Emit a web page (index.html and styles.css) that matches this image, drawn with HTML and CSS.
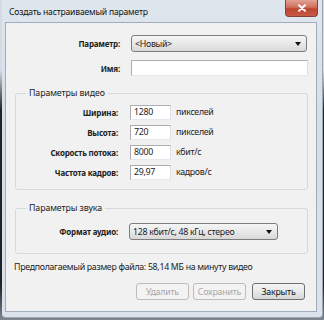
FILE: index.html
```html
<!DOCTYPE html>
<html lang="ru">
<head>
<meta charset="utf-8">
<link rel="stylesheet" href="styles.css">
</head>
<body>
<div class="window">
  <div class="titlebar">
    <span class="title">Создать настраиваемый параметр</span>
    <span class="close"><svg width="10" height="8" viewBox="0 0 10 8"><path d="M2 1.2 L8 6.8 M8 1.2 L2 6.8" stroke="#fff" stroke-width="2" stroke-linecap="round"/></svg></span>
  </div>
  <div class="client">
    <div class="row top-row first">
      <label class="lbl top-lbl">Параметр:</label>
      <div class="select wide"><span>&lt;Новый&gt;</span><span class="arrow"></span></div>
    </div>
    <div class="row top-row second">
      <label class="lbl top-lbl">Имя:</label>
      <div class="input wide-input"></div>
    </div>

    <fieldset class="group video">
      <legend>Параметры видео</legend>
      <div class="row grow"><label class="lbl grp-lbl">Ширина:</label><div class="input small">1280</div><span class="unit">пикселей</span></div>
      <div class="row grow"><label class="lbl grp-lbl">Высота:</label><div class="input small">720</div><span class="unit">пикселей</span></div>
      <div class="row grow"><label class="lbl grp-lbl">Скорость потока:</label><div class="input small">8000</div><span class="unit">кбит/с</span></div>
      <div class="row grow"><label class="lbl grp-lbl">Частота кадров:</label><div class="input small">29,97</div><span class="unit">кадров/с</span></div>
    </fieldset>

    <fieldset class="group audio">
      <legend>Параметры звука</legend>
      <div class="row arow"><label class="lbl grp-lbl">Формат аудио:</label><div class="select mid"><span>128 кбит/с, 48 кГц, стерео</span><span class="arrow"></span></div></div>
    </fieldset>

    <p class="note">Предполагаемый размер файла: 58,14 МБ на минуту видео</p>

    <div class="buttons">
      <button class="btn disabled">Удалить</button>
      <button class="btn disabled">Сохранить</button>
      <button class="btn close-btn">Закрыть</button>
    </div>
  </div>
</div>
</body>
</html>
```

FILE: styles.css
```css
html, body {
  margin: 0;
  padding: 0;
}
body {
  width: 324px;
  height: 320px;
  overflow: hidden;
  background: linear-gradient(#d3dbe4 0, #d3dbe4 70px, #1f232a 110px, #1f232a 285px, #7d8792 320px);
  font-family: "Noto Sans", "Open Sans", sans-serif;
  font-size: 8.8px;
  letter-spacing: -0.3px;
  color: #222;
}
.window {
  margin-left: 2px;
  width: 321px;
  height: 318px;
  box-sizing: border-box;
  background: linear-gradient(#dfe6ee, #d5dde7 40%, #dbe2eb);
  border-right: 1px solid #9aa6b4;
  border-bottom: 1px solid #9aa6b4;
  border-radius: 0 0 4px 4px;
  padding: 0 5px 5px 3px;
  display: flex;
  flex-direction: column;
}
.titlebar {
  height: 22px;
  display: flex;
  align-items: center;
  position: relative;
}
.title {
  font-size: 8.6px;
  letter-spacing: -0.2px;
  color: #111;
  margin-left: 4px;
  margin-top: 1px;
}
.close {
  position: absolute;
  right: -1px;
  top: 0;
  width: 33px;
  height: 17px;
  border-radius: 0 0 4px 4px;
  background: linear-gradient(#e3a194, #d0705d 45%, #bf4530 55%, #c65a45);
  border: 1px solid #8a4038;
  border-top: none;
  box-sizing: border-box;
  display: flex;
  align-items: center;
  justify-content: center;
}
.client {
  height: 290px;
  box-sizing: border-box;
  background: #f1f1f1;
  border: 1px solid #a0acba;
  display: flex;
  flex-direction: column;
}
.row {
  display: flex;
  align-items: center;
}
.lbl {
  font-weight: bold;
  font-size: 8px;
  letter-spacing: -0.2px;
  text-align: right;
  flex: none;
}
.top-lbl { width: 114px; margin-right: 11px; }
.first { margin-top: 12px; height: 17px; }
.second { margin-top: 8px; height: 16px; }
.select {
  height: 17px;
  box-sizing: border-box;
  border: 1px solid #7d7d7d;
  border-radius: 3px;
  background: linear-gradient(#f5f5f5, #e9e9e9 50%, #d8d8d8);
  display: flex;
  align-items: center;
  justify-content: space-between;
  padding: 0 5px 0 3px;
}
.wide { width: 176px; }
.mid { width: 149px; }
.arrow {
  width: 0;
  height: 0;
  border-left: 3px solid transparent;
  border-right: 3px solid transparent;
  border-top: 4px solid #111;
}
.input {
  box-sizing: border-box;
  border: 1px solid #abadb3;
  border-bottom-color: #e3e9ef;
  border-right-color: #dbdfe6;
  background: #fff;
  padding: 0 3px;
}
.wide-input { width: 177px; height: 16px; }
.group {
  margin: 0 8px 0 9px;
  border: 1px solid #d3d9df;
  border-radius: 3px;
  padding: 0;
}
.group legend {
  margin-left: 10px;
  padding: 0 3px;
  line-height: 12px;
  letter-spacing: -0.1px;
}
.video { margin-top: 11px; padding: 3px 0 7px; }
.grow { height: 20px; }
.small { width: 41px; height: 15px; line-height: 13px; }
.grp-lbl { width: 102px; margin-right: 12px; }
.unit { margin-left: 5px; }
.audio { margin-top: 12px; padding: 9px 0 13px; }
.arow { height: 17px; }
.arow .grp-lbl { margin-right: 11px; }
.note { margin: 8px 0 0 8px; line-height: 11px; }
.buttons {
  display: flex;
  justify-content: flex-end;
  margin: 10px 11px 0 0;
}
.btn {
  width: 53px;
  height: 17px;
  padding: 0;
  margin-left: 4px;
  font-family: inherit;
  font-size: 8.8px;
  letter-spacing: -0.2px;
  border: 1px solid #707070;
  border-radius: 3px;
  background: linear-gradient(#f3f3f3, #e9e9e9 50%, #d5d5d5);
  color: #111;
}
.close-btn { margin-left: 6px; }
.btn.disabled {
  border-color: #bcbcbc;
  background: #f3f3f3;
  color: #a8a8a8;
}
```
